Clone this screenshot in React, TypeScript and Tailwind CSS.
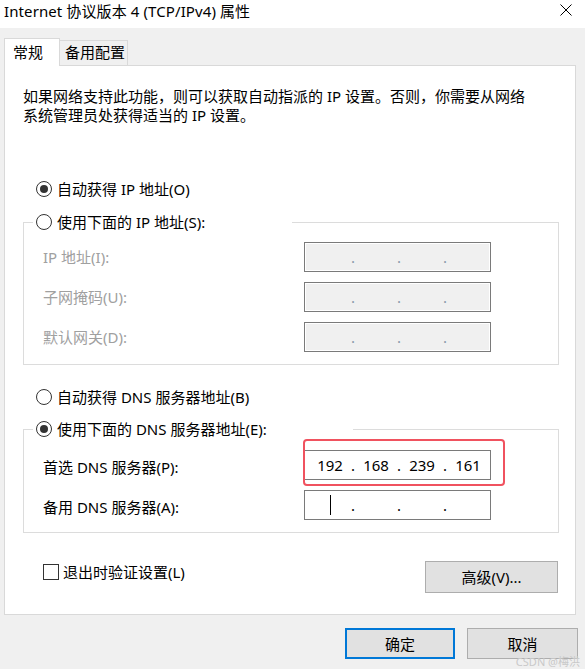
import React from 'react'

const Radio = ({ checked }: { checked?: boolean }) => (
  <span className="w-[16px] h-[16px] rounded-full border border-[#333] bg-white flex items-center justify-center shrink-0">
    {checked && <span className="w-[8px] h-[8px] rounded-full bg-[#333]" />}
  </span>
)

const IpBox = ({ parts, disabled, cursor }: { parts?: string[]; disabled?: boolean; cursor?: boolean }) => {
  const cells = parts ?? ['', '', '', '']
  return (
    <div
      className={
        'w-[187px] h-[30px] border border-[#7a7a7a] flex items-center pl-[7px] ' +
        (disabled ? 'bg-[#f0f0f0] shadow-[inset_0_0_0_1px_#ffffff]' : 'bg-white')
      }
    >
      {cells.map((p, i) => (
        <div key={i} className="flex items-center">
          <span className="w-[36px] text-center flex justify-center items-center h-[20px]">
            {cursor && i === 0 ? <span className="w-[1px] h-[20px] bg-black" /> : p}
          </span>
          {i < 3 && (
            <span className={'w-[10px] text-center ' + (disabled ? 'text-[#8a9aab]' : 'text-black')}>.</span>
          )}
        </div>
      ))}
    </div>
  )
}

export default function App() {
  return (
    <div className="w-[585px] h-[669px] bg-[#f0f0f0] relative overflow-hidden text-[15px] leading-[20px] text-black font-['Noto_Sans','Noto_Sans_CJK_SC',sans-serif]">
      {/* Title bar */}
      <div className="h-[28px] bg-white flex items-start justify-between pl-[4px] pr-[13px] pt-[1px]">
        <span className="tracking-[0.1px]">Internet 协议版本 4 (TCP/IPv4) 属性</span>
        <svg width="12" height="12" viewBox="0 0 12 12" className="mt-[3px]">
          <path d="M0.5 0.5 L11.5 11.5 M11.5 0.5 L0.5 11.5" stroke="#000" strokeWidth="1" fill="none" />
        </svg>
      </div>

      {/* Tabs */}
      <div className="flex items-end pl-[4px] mt-[10px] h-[27px]">
        <div className="w-[56px] h-[28px] bg-white border border-[#d9d9d9] border-b-0 relative z-10 mb-[-1px] pl-[8px] pt-[3px]">
          常规
        </div>
        <div className="w-[68px] h-[25px] bg-[#f0f0f0] border border-[#d9d9d9] border-l-0 border-b-0 pl-[5px] pt-[1px]">
          备用配置
        </div>
      </div>

      {/* Panel */}
      <div className="ml-[4px] w-[572px] h-[550px] bg-white border border-[#d9d9d9] flex flex-col">
        <p className="mt-[21px] pl-[18px] leading-[19px]">
          如果网络支持此功能，则可以获取自动指派的 IP 设置。否则，你需要从网络
          <br />
          系统管理员处获得适当的 IP 设置。
        </p>

        <div className="mt-[54px] h-[20px] flex items-center pl-[31px] gap-[5px]">
          <Radio checked />
          <span>自动获得 IP 地址(O)</span>
        </div>

        {/* IP group */}
        <div className="mt-[23px] ml-[18px] w-[536px] border border-[#dcdcdc] pb-[12px]">
          <div className="-mt-[11px] ml-[9px] w-[259px] h-[20px] bg-white flex items-center pl-[3px] gap-[5px]">
            <Radio />
            <span>使用下面的 IP 地址(S):</span>
          </div>
          {['IP 地址(I):', '子网掩码(U):', '默认网关(D):'].map((l) => (
            <div key={l} className="mt-[10px] flex items-center pl-[19px]">
              <span className="w-[261px] text-[#a0a0a0]">{l}</span>
              <IpBox disabled />
            </div>
          ))}
        </div>

        <div className="mt-[22px] h-[20px] flex items-center pl-[31px] gap-[5px]">
          <Radio />
          <span>自动获得 DNS 服务器地址(B)</span>
        </div>

        {/* DNS group */}
        <div className="mt-[22px] ml-[18px] w-[536px] border border-[#dcdcdc] pb-[12px]">
          <div className="-mt-[11px] ml-[9px] w-[320px] h-[20px] bg-white flex items-center pl-[3px] gap-[5px]">
            <Radio checked />
            <span>使用下面的 DNS 服务器地址(E):</span>
          </div>
          <div className="mt-[11px] flex items-center pl-[19px]">
            <span className="w-[261px] pt-[3px]">首选 DNS 服务器(P):</span>
            <IpBox parts={['192', '168', '239', '161']} />
          </div>
          <div className="mt-[10px] flex items-center pl-[19px]">
            <span className="w-[261px] pt-[3px]">备用 DNS 服务器(A):</span>
            <IpBox cursor />
          </div>
        </div>

        <div className="mt-[28px] flex items-start justify-between pl-[38px] pr-[17px]">
          <div className="flex items-center gap-[4px] mt-[1px]">
            <span className="w-[16px] h-[16px] border border-[#333] bg-white" />
            <span>退出时验证设置(L)</span>
          </div>
          <button className="w-[133px] h-[32px] bg-[#e1e1e1] border border-[#adadad]">高级(V)...</button>
        </div>
      </div>

      {/* Bottom buttons */}
      <div className="mt-[13px] flex justify-end gap-[12px] pr-[7px]">
        <button className="w-[110px] h-[31px] bg-[#e1e1e1] border-2 border-[#0078d7]">确定</button>
        <button className="w-[111px] h-[31px] bg-[#e1e1e1] border border-[#adadad]">取消</button>
      </div>

      {/* Annotation highlight */}
      <div className="absolute left-[303px] top-[439px] w-[202px] h-[47px] border-2 border-[#f0525f] rounded-[4px]" />

      {/* Watermark */}
      <span className="absolute right-[5px] bottom-[2px] text-[11px] leading-[11px] text-[#c9c9c9]">CSDN @梅洪</span>
    </div>
  )
}
